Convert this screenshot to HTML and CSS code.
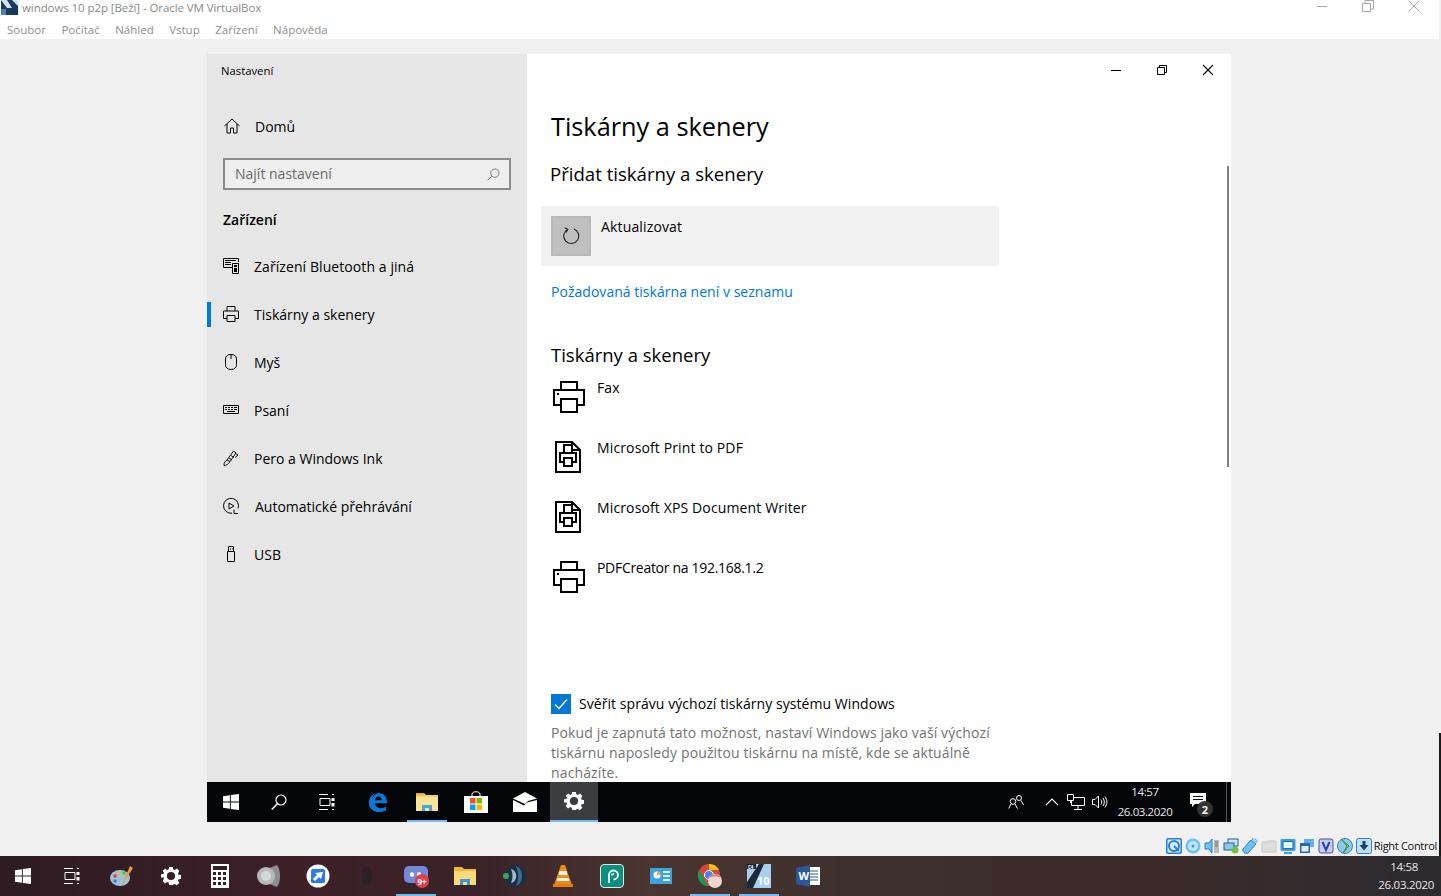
FILE: index.html
```html
<!DOCTYPE html>
<html lang="cs">
<head>
<meta charset="utf-8">
<title>windows 10 p2p [Beží] - Oracle VM VirtualBox</title>
<link rel="stylesheet" href="styles.css">
</head>
<body>
<svg class="defs" width="0" height="0" aria-hidden="true">
  <symbol id="win" viewBox="0 0 16 16"><path d="M0 2.200 6.900 1.200V7.600H0ZM7.800 1.100 16 0V7.600H7.800ZM0 8.500H6.900V14.800L0 13.800ZM7.800 8.500H16V16L7.800 14.900Z" fill="#fff"/></symbol>
  <symbol id="tv" viewBox="0 0 16 16"><path d="M0 .5H9M0 15.500H9M1 4.500H11V11.500H1ZM13 .5H15M13 15.500H15" fill="none" stroke="#fff"/><path d="M12.500 4h3v3h-3ZM12.500 9h3v3.500h-3Z" fill="#fff"/></symbol>
  <symbol id="gear" viewBox="-1 -1 22 22"><path fill-rule="evenodd" fill="#fff" d="M8 0h4l.5 2.700 1.700.7L16.500 1.800l2.800 2.800-1.600 2.300.7 1.700 2.600.4v4l-2.600.5-.7 1.700 1.500 2.300-2.800 2.800-2.300-1.600-1.700.7L12 20H8l-.5-2.600-1.700-.7-2.300 1.500L.7 15.400l1.600-2.300-.7-1.700L-1 12V8l2.600-.1.700-1.700L.7 4.600l2.800-2.800 2.300 1.600 1.700-.7ZM10 5.500a4.500 4.500 0 1 0 0 9 4.500 4.500 0 0 0 0-9Z"/></symbol>
  <symbol id="printer" viewBox="0 0 32 32"><path d="M8 9V1H24V9M8 24H1V9H31V24H24M8 18H24V31H8Z" fill="none" stroke="#000" stroke-width="2"/><path d="M4 12h2v2H4Z" fill="#000"/></symbol>
  <symbol id="docprinter" viewBox="0 0 26 32"><path d="M1 1H17L25 9V31H1ZM17 1V9H25" fill="none" stroke="#000" stroke-width="2"/><path d="M9 12V4H17V12M9 21H5V12H21V21H17M9 17H17V25H9Z" fill="none" stroke="#000" stroke-width="2"/></symbol>
</svg>

<div class="host">
  <header class="host-title">
    <svg class="app-logo" viewBox="0 0 17 15"><rect width="17" height="15" fill="#1c3a66"/><path d="M0 0h6l5 8H6ZM11 0h6v6Z" fill="#cfe3f5"/><rect x="10" y="8" width="7" height="7" fill="#16385f"/><path d="M0 9h5v6H0Z" fill="#4d7fb5"/></svg>
    <span class="host-title-text">windows 10 p2p [Beží] - Oracle VM VirtualBox</span>
    <div class="host-controls">
      <svg viewBox="0 0 12 12"><path d="M1 6.500H11" stroke="#a8a8a8"/></svg>
      <svg viewBox="0 0 12 12"><path d="M.5 3.500H8.500V11.500H.5ZM3 3.500V.5H11.500V9H8.500" fill="none" stroke="#a8a8a8"/></svg>
      <svg viewBox="0 0 12 12"><path d="M.5.5 11.500 11.500M11.500.5.5 11.500" stroke="#a8a8a8"/></svg>
    </div>
  </header>
  <nav class="host-menu">
    <span>Soubor</span><span>Počítač</span><span>Náhled</span><span>Vstup</span><span>Zařízení</span><span>Nápověda</span>
  </nav>

  <div class="vm">
    <div class="guest">
      <div class="win">
        <aside class="side">
          <div class="side-title">Nastavení</div>
          <div class="side-home">
            <svg class="side-icon" viewBox="0 0 16 16"><path d="M.5 8 8 1l7.500 7M3 6V15H6.500V10H9.500V15H13V6" fill="none" stroke="#000"/></svg>
            <span>Domů</span>
          </div>
          <div class="search">
            <span>Najít nastavení</span>
            <svg viewBox="0 0 14 14"><circle cx="8.500" cy="5.500" r="4.500" fill="none" stroke="#777"/><path d="M5.300 8.700.8 13.200" stroke="#777"/></svg>
          </div>
          <div class="side-section">Zařízení</div>
          <ul class="side-list">
            <li>
              <svg class="side-icon" viewBox="0 0 16 16"><path d="M.5.5H15.500V4M.5.5V9.500H9M9.500 5.500H15.500V15.500H9.500Z" fill="none" stroke="#000"/><path d="M2 2h11v1H2ZM2 4h6v1H2ZM2 6h6v1H2ZM11 7h3v2h-3ZM11 10h3v4h-3Z" fill="#000"/></svg>
              <span class="wide">Zařízení Bluetooth a jiná</span>
            </li>
            <li class="active">
              <svg class="side-icon" viewBox="0 0 16 16"><path d="M4 5V.5H12V5M4 12.500H.5V5H15.500V12.500H12M4 9.500H12V15.500H4Z" fill="none" stroke="#000"/></svg>
              <span>Tiskárny a skenery</span>
            </li>
            <li>
              <svg class="side-icon" viewBox="0 0 16 16"><path d="M2.500 5C2.500 2 4.500.5 8 .5s5.500 1.500 5.500 4.500V10.500C13.500 13.500 11.500 15.500 8 15.500S2.500 13.500 2.500 10.500ZM8 .5V5" fill="none" stroke="#000"/></svg>
              <span>Myš</span>
            </li>
            <li>
              <svg class="side-icon" viewBox="0 0 16 16"><path d="M.5 3.500H15.500V11.500H.5Z" fill="none" stroke="#000"/><path d="M2 5h2v1H2ZM5 5h2v1H5ZM8 5h2v1H8ZM11 5h3v1h-3ZM2 7h2v1H2ZM5 7h2v1H5ZM8 7h2v1H8ZM11 7h3v1h-3ZM4 9h8v1H4Z" fill="#000"/></svg>
              <span>Psaní</span>
            </li>
            <li>
              <svg class="side-icon" viewBox="0 0 16 16"><path d="M4 10 10.500 1l2.500 2-6 8.500ZM6 8l3 2M8 5.500l3 2M12.500 3.500l2.500 1.500-3 2.500M4 10C2 11 .8 13 1 15.500 3.500 15.500 5.500 14 7 11.500" fill="none" stroke="#000" stroke-width=".9"/></svg>
              <span>Pero a Windows Ink</span>
            </li>
            <li>
              <svg class="side-icon" viewBox="0 0 16 16"><path d="M9 15.200A7.500 7.500 0 1 1 15 10.500M11 11.500V15.500H15" fill="none" stroke="#000"/><path d="M6 5 11 8 6 11Z" fill="none" stroke="#000"/></svg>
              <span class="auto">Automatické přehrávání</span>
            </li>
            <li>
              <svg class="side-icon" viewBox="0 0 16 16"><path d="M4.500 5.500H11.500V15.500H4.500ZM5.500 5.500V.5H10.500V5.500" fill="none" stroke="#000"/><path d="M7 2.500h1v1H7ZM9 2.500h.8v1H9Z" fill="#000"/></svg>
              <span>USB</span>
            </li>
          </ul>
        </aside>

        <main class="pane">
          <div class="win-controls">
            <svg viewBox="0 0 12 12"><path d="M1 6.500H11" stroke="#000"/></svg>
            <svg viewBox="0 0 12 12"><path d="M1.500 3.500H8.500V10.500H1.500ZM3.500 3.500V1.500H10.500V8.500H8.500" fill="none" stroke="#000"/></svg>
            <svg viewBox="0 0 12 12"><path d="M1 1 11 11M11 1 1 11" stroke="#000" stroke-width="1.100"/></svg>
          </div>
          <h1 class="pane-title">Tiskárny a skenery</h1>
          <h2 class="add-title">Přidat tiskárny a skenery</h2>
          <div class="refresh">
            <div class="refresh-tile">
              <svg viewBox="0 0 18 18"><path d="M5.500 2.500A7.500 7.500 0 1 0 12 2" fill="none" stroke="#222" stroke-width="1.100"/><path d="M2.800 .8 5.800 2.500 4 5.500" fill="none" stroke="#222" stroke-width="1.100"/></svg>
            </div>
            <span class="refresh-label">Aktualizovat</span>
          </div>
          <a class="link" href="#">Požadovaná tiskárna není v seznamu</a>
          <h2 class="list-title">Tiskárny a skenery</h2>
          <ul class="printers">
            <li><svg class="pr-icon"><use href="#printer"/></svg><span>Fax</span></li>
            <li><svg class="doc-icon"><use href="#docprinter"/></svg><span>Microsoft Print to PDF</span></li>
            <li><svg class="doc-icon"><use href="#docprinter"/></svg><span>Microsoft XPS Document Writer</span></li>
            <li><svg class="pr-icon"><use href="#printer"/></svg><span class="tight">PDFCreator na 192.168.1.2</span></li>
          </ul>
          <label class="check">
            <span class="check-box"><svg viewBox="0 0 20 20"><path d="M4 10.500 8 14.500 16 5.500" fill="none" stroke="#fff" stroke-width="1.500"/></svg></span>
            <span>Svěřit správu výchozí tiskárny systému Windows</span>
          </label>
          <p class="desc">Pokud je zapnutá tato možnost, nastaví Windows jako vaší výchozí tiskárnu naposledy použitou tiskárnu na místě, kde se aktuálně nacházíte.</p>
          <div class="scrollbar"></div>
        </main>
      </div>

      <footer class="g-task">
        <div class="g-slot"><svg class="ic16"><use href="#win"/></svg></div>
        <div class="g-slot"><svg class="ic16" viewBox="0 0 16 16"><circle cx="10" cy="6" r="5" fill="none" stroke="#fff" stroke-width="1.200"/><path d="M6.500 9.500.8 15.500" stroke="#fff" stroke-width="1.500"/></svg></div>
        <div class="g-slot"><svg class="ic16"><use href="#tv"/></svg></div>
        <div class="g-slot g-first">
          <svg class="ic22" viewBox="0 0 22 22"><path fill="#0a78d7" d="M11.500 1C17.500 1 21 5 21 12.500H7.500C7.800 16 10.500 17.800 13.500 17.800c2.500 0 4.800-.7 6.500-1.800V20c-2 1.200-4.500 2-7.500 2C6 22 1 18 1 12 1 8 3 3.500 8 1.500 5.500 4 5 6 5 7 6.500 3.500 9 1 11.500 1ZM7.500 9H15C15 6.500 13.500 5 11.500 5S8 6.500 7.500 9Z"/></svg>
        </div>
        <div class="g-slot g-open">
          <svg class="ic22" viewBox="0 0 22 20"><path d="M0 1H8L10 3H22V19H0Z" fill="#f5cf6b"/><path d="M0 1H8V3H0Z" fill="#e6b140"/><path d="M0 5H22V19H0Z" fill="#fbe49a"/><path d="M6 19V13H16V19H13V16H9V19Z" fill="#4aa8d8"/></svg>
        </div>
        <div class="g-slot">
          <svg class="ic24" viewBox="0 0 24 24"><path d="M8 6V4C8 1 16 1 16 4V6" fill="none" stroke="#fff"/><path d="M0 6H24V23H0Z" fill="#fff"/><path d="M6 8H11.500V13.500H6Z" fill="#f25022"/><path d="M12.500 8H18V13.500H12.500Z" fill="#7fba00"/><path d="M6 14.500H11.500V20H6Z" fill="#00a4ef"/><path d="M12.500 14.500H18V20H12.500Z" fill="#ffb900"/></svg>
        </div>
        <div class="g-slot">
          <svg class="ic24" viewBox="0 0 24 20"><path d="M0 6.500 12 0 24 6.500 15 9 12 12Z" fill="#fff"/><path d="M0 8 11 13.500 14 10.500 24 8V20H0Z" fill="#fff"/></svg>
        </div>
        <div class="g-slot g-active"><svg class="ic18"><use href="#gear"/></svg></div>
        <div class="g-tray">
          <svg class="tray-people" viewBox="0 0 16 14"><circle cx="5" cy="6.500" r="2.800" fill="none" stroke="#fff"/><circle cx="11" cy="3" r="2.500" fill="none" stroke="#fff"/><path d="M.8 13.500 3 9M7 9 9.500 13.500M13 5.500 15.500 10" fill="none" stroke="#fff"/></svg>
          <svg class="tray-chev" viewBox="0 0 14 8"><path d="M1 7 7 1l6 6" fill="none" stroke="#fff" stroke-width="1.100"/></svg>
          <svg class="tray-net" viewBox="0 0 18 16"><path d="M4.500 3.500H17.500V11.500H4.500ZM11 11.500V15M7 15.500H15" fill="none" stroke="#fff"/><path d="M.5.5H6.500V6.500H.5ZM3.500 6.500V9" fill="#05060a" stroke="#fff"/></svg>
          <svg class="tray-vol" viewBox="0 0 16 14"><path d="M.5 4.500H3L6.500 1V13L3 9.500H.5Z" fill="none" stroke="#fff"/><path d="M9 4.500c1 1.500 1 3.500 0 5M11 3c1.800 2.500 1.800 5.500 0 8M13 1.500c2.500 3.500 2.500 7.500 0 11" fill="none" stroke="#fff"/></svg>
          <div class="g-clock"><span>14:57</span><span>26.03.2020</span></div>
          <div class="notif">
            <svg viewBox="0 0 16 14"><path d="M0 0H16V11H5L2 14V11H0Z" fill="#fff"/><path d="M3 3h10v1H3ZM3 6h10v1H3Z" fill="#05060a"/></svg>
            <span class="notif-badge">2</span>
          </div>
        </div>
      </footer>
    </div>

    <div class="status">
      <svg viewBox="0 0 16 16"><rect width="16" height="16" rx="2" fill="#2d7fd0"/><rect x="1.500" y="1.500" width="13" height="13" rx="1" fill="#d5ecfb"/><circle cx="8" cy="8" r="5" fill="none" stroke="#2d7fd0" stroke-width="2"/><path d="M8 8 13 13" stroke="#2d7fd0" stroke-width="2"/></svg>
      <svg viewBox="0 0 16 16"><circle cx="8" cy="8" r="7.500" fill="#6cc3ef"/><circle cx="8" cy="8" r="5" fill="#bfe6fa"/><circle cx="8" cy="8" r="1.500" fill="#3b8fd0"/></svg>
      <svg viewBox="0 0 16 16"><path d="M1 5H5L8 1V15L5 11H1Z" fill="#6cc3ef" stroke="#2d7fd0"/><rect x="10" y="2" width="5" height="13" fill="#bbb"/><path d="M11 4h3M11 6h3M11 8h3" stroke="#777"/></svg>
      <svg viewBox="0 0 16 16"><rect x="5" y="1" width="10" height="7" fill="#cde8fa" stroke="#235c96"/><rect x="1" y="5" width="10" height="7" fill="#8cc8ef" stroke="#235c96"/><circle cx="12" cy="12" r="3.500" fill="#76c043"/></svg>
      <svg viewBox="0 0 16 16"><path d="M1 11 9 2l5 4-8 9C3 16 0 14 1 11Z" fill="#6cc3ef" stroke="#2d7fd0"/><path d="M10 1l4.500 3.500 1-1.500L11.500 0Z" fill="#cde8fa" stroke="#2d7fd0" stroke-width=".6"/></svg>
      <svg viewBox="0 0 16 16"><path d="M1 4H6L7 3H15V14H1Z" fill="#dedede" stroke="#c8c8c8"/></svg>
      <svg viewBox="0 0 16 16"><rect x=".5" y="1" width="15" height="12" rx="1" fill="#3f9fdc"/><rect x="3" y="3.500" width="10" height="7" fill="#e4f4fd" stroke="#1d6fb2"/><path d="M4 15h8" stroke="#3f9fdc" stroke-width="2"/></svg>
      <svg viewBox="0 0 16 16"><rect x="5" y="1" width="10" height="8" fill="#6aa9e4"/><rect x="1" y="5" width="10" height="10" fill="#2367b5"/><rect x="2.500" y="8" width="7" height="5.500" fill="#dff0fb"/></svg>
      <svg viewBox="0 0 16 16"><rect x="1" y="1" width="14" height="14" rx="2" fill="#c8cdf0" stroke="#3f4fb8"/><path d="M4.500 4 8 12l3.500-8" fill="none" stroke="#2f3fa8" stroke-width="2"/></svg>
      <svg viewBox="0 0 16 16"><circle cx="8" cy="8" r="7.500" fill="#8cc8ef" stroke="#2d7fd0"/><path d="M4 1 12 8 6 15 10 8Z" fill="#7cc142" stroke="#4f8f20"/></svg>
      <svg viewBox="0 0 16 16"><rect x=".5" y=".5" width="15" height="15" rx="2" fill="#bfe0f7" stroke="#2d7fd0"/><path d="M6.500 3H9.500V7H12.500L8 12.500 3.500 7H6.500Z" fill="#17407a"/></svg>
      <span class="status-key">Right Control</span>
    </div>
  </div>

  <footer class="h-task">
    <div class="h-slot h-a"><svg class="ic16"><use href="#win"/></svg></div>
    <div class="h-slot h-b"><svg class="ic16"><use href="#tv"/></svg></div>
    <div class="h-slot">
      <svg class="ic24" viewBox="0 0 24 24"><ellipse cx="10" cy="14" rx="10" ry="8" fill="#9fc4d6"/><circle cx="5" cy="12" r="1.800" fill="#d9482b"/><circle cx="9" cy="9" r="1.800" fill="#f0b429"/><circle cx="14" cy="9" r="1.800" fill="#5cb85c"/><circle cx="5" cy="17" r="1.800" fill="#3a7fc8"/><path d="M11 23 20 2l3 2Z" fill="#e59b38"/></svg>
    </div>
    <div class="h-slot"><svg class="ic18"><use href="#gear"/></svg></div>
    <div class="h-slot">
      <svg class="calc" viewBox="0 0 18 24"><path fill="#fff" fill-rule="evenodd" d="M0 0H18V24H0ZM2 2V6H16V2ZM2 8V11H5V8ZM7 8V11H10V8ZM12 8V11H15V8ZM2 13V16H5V13ZM7 13V16H10V13ZM12 13V16H15V13ZM2 18V21H5V18ZM7 18V21H10V18ZM12 18V21H15V18Z"/></svg>
    </div>
    <div class="h-slot">
      <svg class="ic24" viewBox="0 0 24 24"><path d="M10 5 20 1C24 6 24 18 20 23L10 19Z" fill="#8c8f91"/><circle cx="9" cy="12" r="9" fill="#b5b9bb"/><circle cx="9" cy="12" r="5" fill="#d5d8d9"/></svg>
    </div>
    <div class="h-slot">
      <svg class="ic24" viewBox="0 0 24 24"><circle cx="12" cy="12" r="11.500" fill="#fff"/><rect x="5" y="5" width="14" height="14" rx="1.500" fill="#2b7be0"/><path d="M17 8 9 9 11 11 7 15 9 17 13 13 15 15Z" fill="#fff"/></svg>
    </div>
    <div class="h-slot">
      <svg class="ic-dim" viewBox="0 0 10 18"><rect width="10" height="18" rx="5" fill="#2c2026"/></svg>
    </div>
    <div class="h-slot h-run">
      <svg class="ic24" viewBox="0 0 24 22"><rect y="1" width="24" height="17" rx="5" fill="#7289da"/><circle cx="8" cy="9.500" r="2.200" fill="#fff"/><circle cx="15" cy="9.500" r="2.200" fill="#fff"/></svg>
      <span class="h-badge">9+</span>
    </div>
    <div class="h-slot">
      <svg class="ic22" viewBox="0 0 22 20"><path d="M0 1H8L10 3H22V19H0Z" fill="#f0b93c"/><path d="M0 5H22V19H0Z" fill="#fbd978"/><path d="M6 19V13H16V19H13V16H9V19Z" fill="#3a9ad0"/></svg>
    </div>
    <div class="h-slot">
      <svg class="ic24" viewBox="0 0 24 24"><circle cx="13" cy="12" r="11" fill="#1c2f44"/><path d="M14 2C22 5 22 19 14 22 17 16 17 8 14 2Z" fill="#3d6f92"/><path d="M9 5C16 7 16 17 9 19 11 15 11 9 9 5Z" fill="#a7bccb"/><circle cx="4" cy="12" r="3" fill="#3aa655"/></svg>
    </div>
    <div class="h-slot">
      <svg class="ic24" viewBox="0 0 20 24"><path d="M8 1H12L19 21H1Z" fill="#f08a10"/><path d="M6.500 7H13.500L14.500 11H5.500ZM4.500 14H15.500L16.500 17H3.500Z" fill="#f3f3f3"/><rect y="20" width="20" height="3" fill="#e87c0a"/></svg>
    </div>
    <div class="h-slot">
      <svg class="ic24" viewBox="0 0 24 24"><rect x=".5" y=".5" width="23" height="23" rx="3.500" fill="#0b8f7e" stroke="#e8e8e8"/><path d="M9 19V11A4.500 4.500 0 1 1 13.500 15.500M12 11.500A1.500 1.500 0 0 1 14 10" fill="none" stroke="#fff" stroke-width="1.800"/></svg>
    </div>
    <div class="h-slot">
      <svg class="ic22" viewBox="0 0 22 16"><rect width="22" height="16" fill="#3ca3dd"/><circle cx="7" cy="7" r="3.500" fill="#fff"/><path d="M7 7V3.500A3.500 3.500 0 0 1 10.500 7Z" fill="#f2a83a"/><path d="M13 3h7v2h-7ZM13 7h7v2h-7ZM13 11h7v2h-7Z" fill="#d8f0fb"/></svg>
    </div>
    <div class="h-slot h-run">
      <svg class="ic24" viewBox="0 0 24 24"><circle cx="11" cy="11" r="11" fill="#db4437"/><path d="M11 0A11 11 0 0 1 21 6H11Z" fill="#f4c20d"/><path d="M1 6 7 17 11 22A11 11 0 0 1 1 6Z" fill="#0f9d58"/><circle cx="11" cy="11" r="4.500" fill="#4285f4" stroke="#fff"/><circle cx="17" cy="17" r="7" fill="#f2d6d0"/><path d="M10.500 14C12 9 22 9 23.500 14 20 12 14 12 10.500 14Z" fill="#c9858a"/></svg>
    </div>
    <div class="h-slot h-run">
      <svg class="ic24" viewBox="0 0 24 24"><rect width="24" height="24" fill="#a6d0ee"/><path d="M12 0H17L6 24H0V18Z" fill="#1c2a3c"/><path d="M0 0H9V5H0Z" fill="#1c2a3c"/><text x="1" y="4.500" class="tile-c">C4</text><text x="10" y="21" class="tile-num">10</text></svg>
    </div>
    <div class="h-slot">
      <svg class="ic24" viewBox="0 0 24 22"><path d="M7 2H24V20H7Z" fill="#fff"/><path d="M13 6H22M13 9H22M13 12H22M13 15H22" stroke="#2b579a"/><path d="M0 3 14 0V22L0 19Z" fill="#2b579a"/><text x="2.500" y="15" class="tile-w">W</text></svg>
    </div>
    <div class="h-tray">
      <span>14:58</span><span>26.03.2020</span>
    </div>
  </footer>
  <div class="edge-sliver"></div>
</div>
</body>
</html>
```

FILE: styles.css
```css
* { box-sizing: border-box; }
html, body { margin: 0; padding: 0; }
body {
  width: 1441px;
  height: 896px;
  overflow: hidden;
  background: #f0f0f0;
  font-family: "Open Sans", "Noto Sans", "Liberation Sans", sans-serif;
  color: #000;
}
.defs { position: absolute; }
h1, h2, p, ul { margin: 0; padding: 0; font-weight: 400; }
ul { list-style: none; }

.host { position: relative; display: flex; flex-direction: column; width: 1441px; height: 896px; }

.host-title {
  display: flex; align-items: center;
  width: 1439px; height: 19px;
  padding-left: 1px;
  background: #fff;
}
.app-logo { width: 17px; height: 15px; margin-top: -4px; }
.host-title-text { margin-left: 4px; font-size: 11.500px; letter-spacing: -.08px; color: #8a8a8a; margin-top: -4px; }
.host-controls { margin-left: auto; display: flex; gap: 34px; padding-right: 19px; margin-top: -7px; }
.host-controls svg { width: 12px; height: 12px; }

.host-menu {
  display: flex; gap: 15.500px; align-items: center;
  width: 1439px; height: 20px;
  padding-left: 7px;
  background: #fff;
  font-size: 11.500px; color: #8f8f8f;
}

.vm { flex: 1; width: 1439px; padding: 15px 0 0 207px; display: flex; flex-direction: column; background: #f0f0f0; }
.guest { width: 1024px; height: 768px; display: flex; flex-direction: column; }
.win { display: flex; height: 728px; overflow: hidden; }

.side { width: 320px; background: #e6e6e6; flex: none; font-size: 14px; }
.side-title { height: 34px; padding: 9px 0 0 14px; font-size: 11.300px; line-height: 16px; }
.side-home { display: flex; align-items: center; height: 48px; margin-top: 14px; padding-left: 17px; gap: 15px; }
.side-icon { width: 16px; height: 16px; flex: none; }
.search {
  display: flex; align-items: center; justify-content: space-between;
  width: 288px; height: 32px; margin: 8px 0 0 16px; padding: 0 9px 2px 10px;
  background: #eee; border: 2px solid #8a8a8a;
  color: #6b6b6b; font-size: 14px;
}
.search svg { width: 13px; height: 13px; margin-top: 2px; }
.side-section { height: 52px; padding: 18px 0 0 16px; line-height: 24px; font-weight: 600; font-size: 14px; }
.side-list li { position: relative; display: flex; align-items: center; gap: 15px; height: 48px; padding-left: 16px; }
.side-list .active::before { content: ""; position: absolute; left: 0; top: 12px; width: 4px; height: 25px; background: #0078d7; }
.auto { margin-left: 1px; }
.wide { letter-spacing: .08px; }

.pane { position: relative; flex: 1; background: #fff; padding-left: 24px; }
.win-controls { position: absolute; top: 10px; right: 17px; display: flex; gap: 34px; }
.win-controls svg { width: 12px; height: 12px; }
.pane-title { padding-top: 49px; font-size: 25.300px; line-height: 46px; }
.add-title { margin: 12px 0 0 -1px; font-size: 18.600px; line-height: 26px; }
.refresh {
  display: flex; gap: 10px;
  width: 458px; height: 60px; margin: 19px 0 0 -10px; padding: 10px;
  background: #f1f1f1; font-size: 14px; line-height: 20px; letter-spacing: .15px;
}
.refresh-label { padding-top: 1px; }
.refresh-tile { display: flex; align-items: center; justify-content: center; width: 40px; height: 40px; background: #bfbfbf; border: 2px solid #b8b8b8; }
.refresh-tile svg { width: 18px; height: 18px; }
.link { display: block; margin-top: 16px; color: #0078d7; font-size: 14px; line-height: 20px; letter-spacing: .03px; text-decoration: none; }
.list-title { margin-top: 40px; font-size: 18.500px; line-height: 26px; }
.printers { margin-top: 3px; }
.printers li { display: flex; align-items: flex-start; height: 60px; font-size: 14px; line-height: 20px; letter-spacing: .13px; }
.printers span { padding-top: 7px; }
.printers .tight { letter-spacing: -.3px; }
.pr-icon { width: 32px; height: 32px; margin: 10px 12px 0 2px; }
.doc-icon { width: 26px; height: 32px; margin: 10px 16px 0 4px; }
.check { display: flex; align-items: center; gap: 8px; margin-top: 83px; font-size: 14px; line-height: 20px; letter-spacing: .06px; }
.check-box { width: 20px; height: 20px; background: #0078d7; }
.check-box svg { display: block; width: 20px; height: 20px; }
.desc { width: 446px; margin-top: 9px; color: #737373; font-size: 14px; line-height: 20px; letter-spacing: .13px; }
.scrollbar { position: absolute; right: 2px; top: 112px; width: 2px; height: 301px; background: #808080; }

.g-task { display: flex; align-items: stretch; height: 40px; background: #05060a; color: #fff; }
.g-slot { position: relative; display: flex; align-items: center; justify-content: center; width: 48px; }
.g-first { margin-left: 2px; }
.g-first, .g-first ~ .g-slot { width: 49px; }
.g-open::after, .h-run::after {
  content: ""; position: absolute; bottom: 0; left: 50%;
  width: 40px; height: 2px; margin-left: -20px; background: #76b9ed;
}
.g-first ~ .g-active { background: #3b3d41; border-bottom: 2px solid #76b9ed; width: 48px; margin-left: 1px; }
.ic16 { width: 16px; height: 16px; }
.ic18 { width: 20px; height: 20px; }
.ic22 { width: 22px; height: 20px; }
.ic24 { width: 24px; height: 24px; }
.calc { width: 18px; height: 24px; }
.ic-dim { width: 10px; height: 18px; }

.g-tray { display: flex; align-items: center; margin-left: auto; position: relative; width: 232px; height: 40px; }
.g-tray::after { content: ""; position: absolute; right: 4px; top: 0; bottom: 0; width: 1px; background: #555; }
.tray-people { width: 16px; height: 14px; margin-left: 9px; }
.tray-chev { width: 14px; height: 8px; margin-left: 21px; }
.tray-net { width: 18px; height: 16px; margin-left: 8px; }
.tray-vol { width: 16px; height: 14px; margin-left: 7px; }
.g-clock { display: flex; flex-direction: column; align-items: center; width: 56px; margin-left: 9px; font-size: 11.500px; line-height: 20px; letter-spacing: -.4px; color: #e8e8e8; }
.notif { position: relative; width: 18px; height: 14px; margin-left: 17px; margin-top: -4px; }
.notif svg { display: block; width: 16px; height: 14px; }
.notif-badge {
  position: absolute; left: 7px; top: 8px;
  display: flex; align-items: center; justify-content: center;
  width: 16px; height: 16px; border-radius: 50%;
  background: #333; color: #fff; font-size: 11px; font-weight: 700;
}

.status { display: flex; align-items: center; justify-content: flex-end; gap: 3px; height: 20px; margin-top: 14px; margin-left: -207px; padding-right: 2px; }
.status svg { width: 16px; height: 16px; }
.status-key { margin: -2px 0 0 -1px; font-size: 11px; letter-spacing: -.3px; color: #111; }

.h-task {
  display: flex; align-items: stretch;
  height: 40px;
  background: linear-gradient(90deg, #2c1c22 0, #3d1f28 20%, #3a2328 33%, #4a3530 45%, #3d302d 60%, #3a2a28 80%, #2c2b30 100%);
  color: #fff;
}
.h-slot { position: relative; display: flex; align-items: center; justify-content: center; width: 49px; }
.h-a { width: 46px; }
.h-b { width: 51px; }
.h-badge {
  position: absolute; left: 24px; top: 18px;
  display: flex; align-items: center; justify-content: center;
  width: 14px; height: 14px; border-radius: 50%;
  background: #e0404a; color: #fff; font-size: 8px; font-weight: 700;
}
.tile-num { font: 700 11px "Open Sans", sans-serif; fill: #fff; }
.tile-c { font: 700 4.500px "Open Sans", sans-serif; fill: #fff; }
.tile-w { font: 700 11px "Open Sans", sans-serif; fill: #fff; }
.h-tray { display: flex; flex-direction: column; align-items: flex-end; justify-content: center; margin-left: auto; padding-right: 7px; font-size: 11.500px; line-height: 18px; letter-spacing: -.3px; color: #e8e8e8; }
.h-tray span:first-child { padding-right: 16px; }

.edge-sliver { position: absolute; right: 0; top: 733px; width: 2px; height: 123px; background: #1a1a1a; }
```
